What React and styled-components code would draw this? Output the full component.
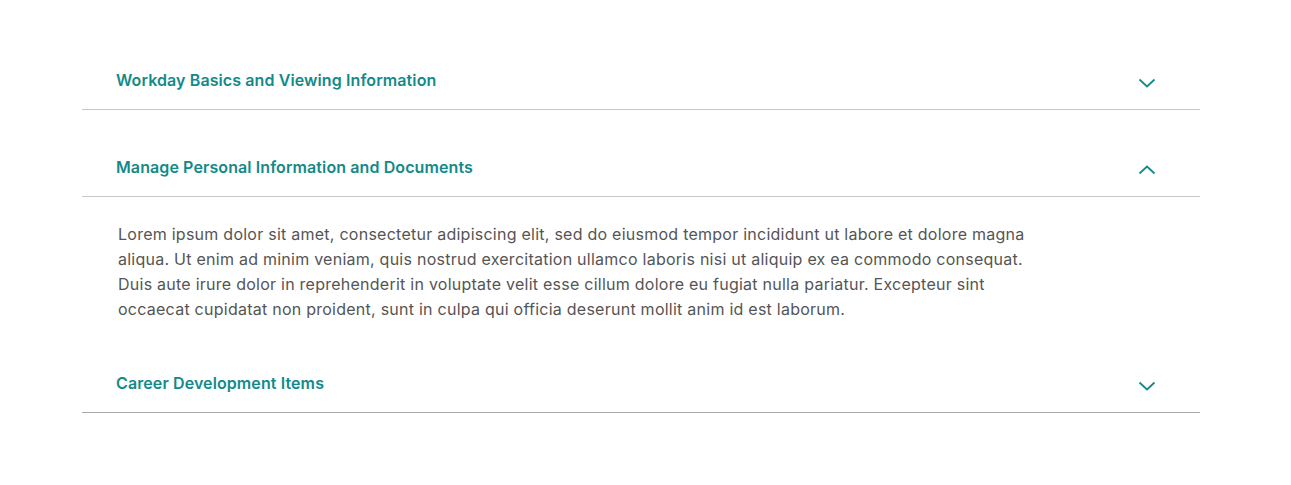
import React, { useState } from 'react';
import styled, { createGlobalStyle } from 'styled-components';

const GlobalStyle = createGlobalStyle`
  body {
    margin: 0;
    background: #ffffff;
    font-family: Inter, "Noto Sans", sans-serif;
  }
`;

const Page = styled.div`
  padding: 52px 91px 0 82px;
`;

const List = styled.div`
  display: flex;
  flex-direction: column;
  gap: 29px;
`;

const Item = styled.section`
  display: flex;
  flex-direction: column;
`;

const Header = styled.button`
  display: flex;
  align-items: center;
  justify-content: space-between;
  height: 58px;
  padding: 0 44px 2px 34px;
  background: none;
  border: none;
  border-bottom: 1px solid ${p => (p.$dark ? '#a9a9a9' : '#c8c8c8')};
  cursor: pointer;
  text-align: left;
`;

const Title = styled.span`
  color: #138a88;
  font-family: Inter, "Noto Sans", sans-serif;
  font-size: 16px;
  font-weight: 600;
  letter-spacing: 0.1px;
`;

const Chevron = styled.svg`
  width: 18px;
  height: 10px;
  margin-top: 6px;
  transform: ${p => (p.$open ? 'rotate(180deg)' : 'none')};
`;

const Body = styled.div`
  padding: 25px 0 4px 36px;
  max-width: 925px;
  color: #555555;
  font-size: 16px;
  line-height: 25px;
  letter-spacing: 0.25px;
`;

const items = [
  { title: 'Workday Basics and Viewing Information' },
  {
    title: 'Manage Personal Information and Documents',
    text: 'Lorem ipsum dolor sit amet, consectetur adipiscing elit, sed do eiusmod tempor incididunt ut labore et dolore magna aliqua. Ut enim ad minim veniam, quis nostrud exercitation ullamco laboris nisi ut aliquip ex ea commodo consequat. Duis aute irure dolor in reprehenderit in voluptate velit esse cillum dolore eu fugiat nulla pariatur. Excepteur sint occaecat cupidatat non proident, sunt in culpa qui officia deserunt mollit anim id est laborum.',
  },
  { title: 'Career Development Items', dark: true },
];

const App = () => {
  const [open, setOpen] = useState(1);

  return (
    <>
      <GlobalStyle />
      <Page>
        <List>
          {items.map((item, i) => (
            <Item key={item.title}>
              <Header $dark={item.dark} onClick={() => setOpen(open === i ? -1 : i)}>
                <Title>{item.title}</Title>
                <Chevron viewBox="0 0 18 10" $open={open === i}>
                  <path d="M1.5 1.5 L9 8.5 L16.5 1.5" fill="none" stroke="#138a88" strokeWidth="1.8" />
                </Chevron>
              </Header>
              {open === i && item.text && <Body>{item.text}</Body>}
            </Item>
          ))}
        </List>
      </Page>
    </>
  );
};

export default App;
